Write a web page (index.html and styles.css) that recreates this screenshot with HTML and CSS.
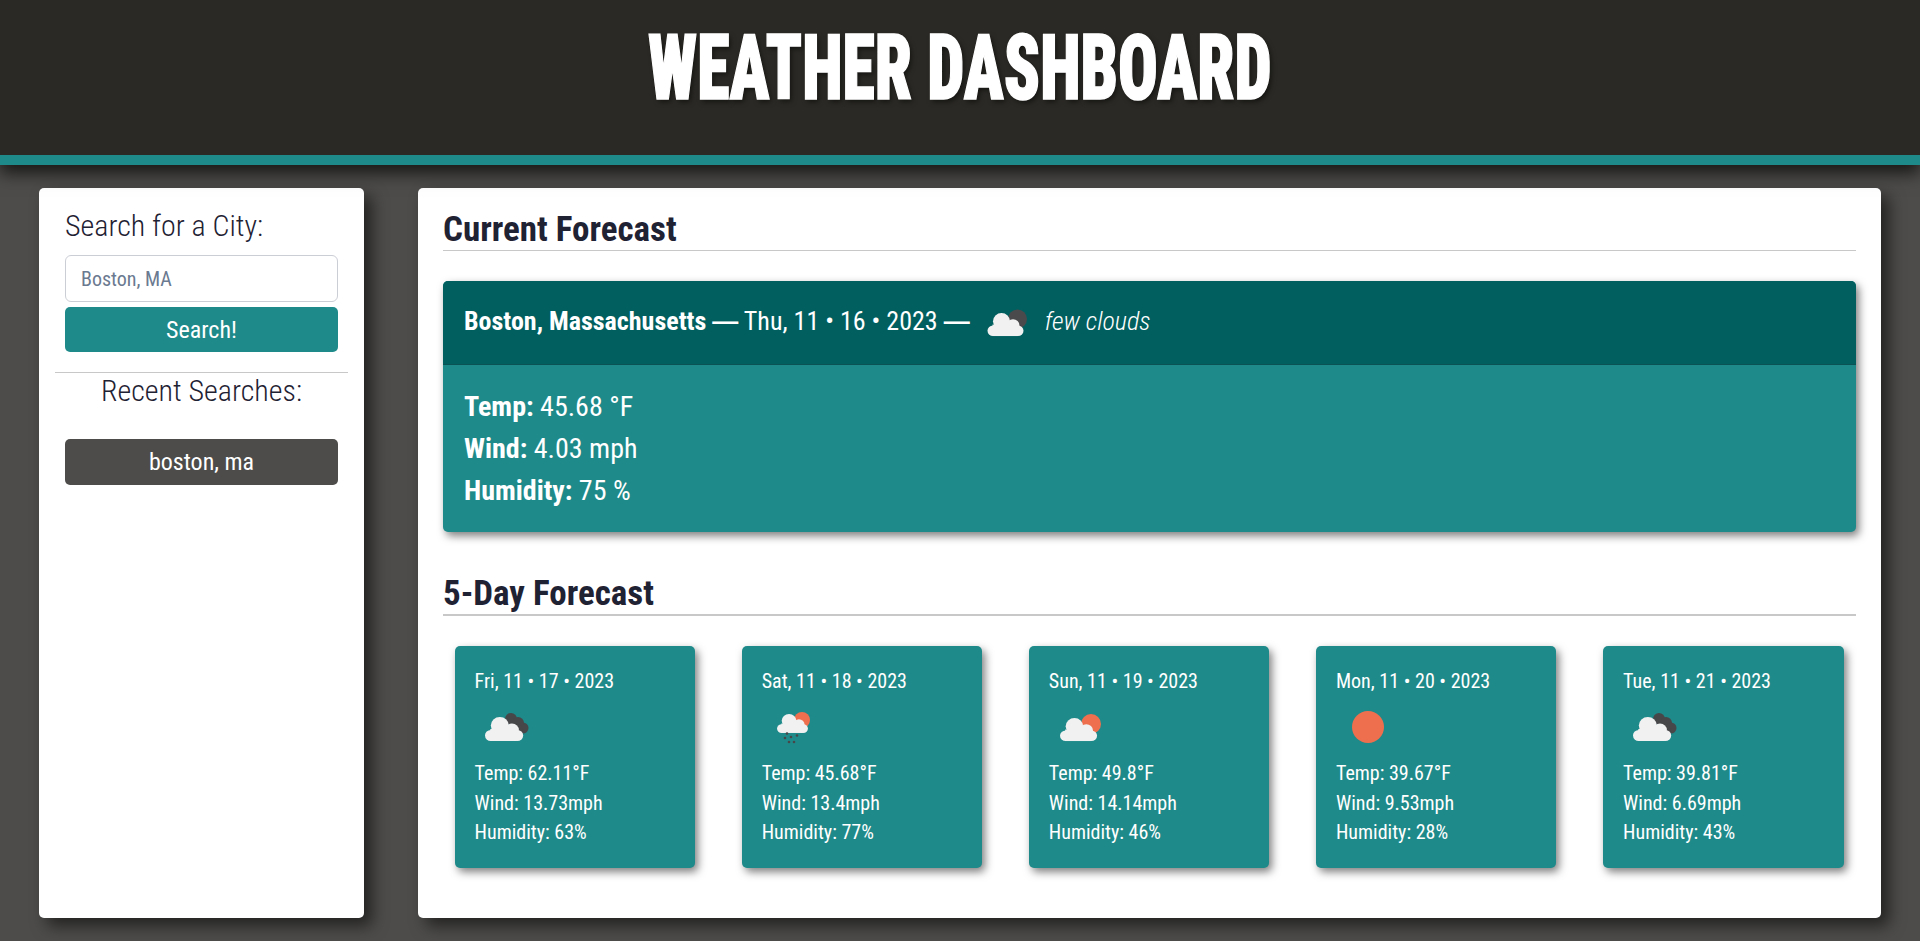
FILE: index.html
```html
<!DOCTYPE html>
<html lang="en">
<head>
<meta charset="utf-8">
<title>Weather Dashboard</title>
<link rel="stylesheet" href="styles.css">
</head>
<body>
<header class="site-header"><h1 class="site-title"><span class="site-title-text">WEATHER DASHBOARD</span></h1></header>
<div class="layout">
  <aside class="sidebar">
    <form class="search">
      <label class="search-label" for="city">Search for a City:</label>
      <input class="search-input" id="city" type="text" placeholder="Boston, MA">
      <button class="btn btn-teal" type="button">Search!</button>
    </form>
    <hr class="side-rule">
    <h2 class="recent-title">Recent Searches:</h2>
    <div class="recent-list"><button class="btn btn-dark" type="button">boston, ma</button></div>
  </aside>
  <main class="content">
    <h2 class="section-title">Current Forecast</h2>
    <section class="current">
      <div class="current-head">
        <span><strong>Boston, Massachusetts</strong> <span class="dash">—</span> Thu, 11 • 16 • 2023 <span class="dash">—</span></span>
        <svg class="current-icon" width="44" height="30" viewBox="0 0 44 30"><use href="#i-few"/></svg>
        <em class="current-desc">few clouds</em>
      </div>
      <div class="current-body">
        <p><strong>Temp:</strong> 45.68 °F</p>
        <p><strong>Wind:</strong> 4.03 mph</p>
        <p><strong>Humidity:</strong> 75 %</p>
      </div>
    </section>
    <h2 class="section-title five">5-Day Forecast</h2>
    <section class="days">
      <article class="day">
        <p class="day-date">Fri, 11 • 17 • 2023</p>
        <svg class="day-icon" width="70" height="50" viewBox="0 0 70 50"><use href="#i-broken"/></svg>
        <p>Temp: 62.11°F</p><p>Wind: 13.73mph</p><p>Humidity: 63%</p>
      </article>
      <article class="day">
        <p class="day-date">Sat, 11 • 18 • 2023</p>
        <svg class="day-icon" width="70" height="50" viewBox="0 0 70 50"><use href="#i-rain"/></svg>
        <p>Temp: 45.68°F</p><p>Wind: 13.4mph</p><p>Humidity: 77%</p>
      </article>
      <article class="day">
        <p class="day-date">Sun, 11 • 19 • 2023</p>
        <svg class="day-icon" width="70" height="50" viewBox="0 0 70 50"><use href="#i-sun-cloud"/></svg>
        <p>Temp: 49.8°F</p><p>Wind: 14.14mph</p><p>Humidity: 46%</p>
      </article>
      <article class="day">
        <p class="day-date">Mon, 11 • 20 • 2023</p>
        <svg class="day-icon" width="70" height="50" viewBox="0 0 70 50"><circle cx="32" cy="21" r="16" fill="#ee6f4e"/></svg>
        <p>Temp: 39.67°F</p><p>Wind: 9.53mph</p><p>Humidity: 28%</p>
      </article>
      <article class="day">
        <p class="day-date">Tue, 11 • 21 • 2023</p>
        <svg class="day-icon" width="70" height="50" viewBox="0 0 70 50"><use href="#i-broken"/></svg>
        <p>Temp: 39.81°F</p><p>Wind: 6.69mph</p><p>Humidity: 43%</p>
      </article>
    </section>
  </main>
</div>
<svg class="defs" width="0" height="0">
  <defs>
    <g id="cloud" fill="#f1f1f1">
      <circle cx="5.500" cy="18.500" r="5.500"/>
      <circle cx="14" cy="8.500" r="8.500"/>
      <circle cx="25.500" cy="13" r="6.500"/>
      <circle cx="30.500" cy="18.500" r="5.500"/>
      <rect x="5" y="12" width="25" height="12"/>
    </g>
    <g id="i-few">
      <circle cx="32.500" cy="11" r="9.500" fill="#4a4a4c"/>
      <use href="#cloud" transform="translate(2.500 5) scale(1 .96)"/>
    </g>
    <g id="i-broken">
      <g fill="#47474a">
        <circle cx="36" cy="13" r="6"/><circle cx="43" cy="17" r="6"/><circle cx="48" cy="22" r="5.500"/><circle cx="42" cy="24" r="6"/>
      </g>
      <use href="#cloud" transform="translate(10 11) scale(1.06 1)"/>
    </g>
    <g id="i-rain">
      <circle cx="40" cy="14" r="8" fill="#ee6f4e"/>
      <use href="#cloud" transform="translate(15 8) scale(.86 .79)"/>
      <g fill="#47474a">
        <circle cx="25" cy="27.500" r="1.300"/><circle cx="23" cy="32" r="1.300"/><circle cx="29" cy="31" r="1.300"/><circle cx="35" cy="29.500" r="1.300"/><circle cx="27" cy="36" r="1.300"/><circle cx="32" cy="36" r="1.300"/>
      </g>
    </g>
    <g id="i-sun-cloud">
      <circle cx="42" cy="18" r="10" fill="#ee6f4e"/>
      <use href="#cloud" transform="translate(11 12) scale(1.03 .96)"/>
    </g>
  </defs>
</svg>
</body>
</html>
```

FILE: styles.css
```css
* { box-sizing: border-box; }
html, body { margin: 0; height: 100%; }
body {
  display: flex;
  flex-direction: column;
  background: #4d4c4a;
  color: #1f2233;
  font-family: "Roboto Condensed", "Liberation Sans Narrow", Roboto, sans-serif;
  font-stretch: condensed;
  overflow: hidden;
}
p { margin: 0; }
.defs { position: absolute; }
.site-header {
  height: 165px;
  flex: none;
  background: #2a2925;
  border-bottom: 10px solid #1f8a8a;
  box-shadow: 0 8px 16px rgba(0, 0, 0, .7);
  text-align: center;
  position: relative;
}
.site-title {
  margin: 0;
  padding-top: 17px;
  color: #fff;
  font-family: "Roboto", sans-serif;
  font-weight: 900;
  font-size: 90px;
  line-height: 104px;
  font-stretch: condensed;
}
.site-title-text {
  display: inline-block;
  transform: scaleX(.734);
  -webkit-text-stroke: 1.5px #fff;
  text-shadow: 3px 3px 6px rgba(0, 0, 0, .5);
}
.layout {
  flex: 1;
  display: flex;
  gap: 54px;
  padding: 23px 39px;
  min-height: 0;
}
.sidebar, .content {
  background: #fff;
  border-radius: 5px;
  box-shadow: 8px 8px 16px rgba(0, 0, 0, .55);
}
.sidebar { flex: none; width: 325px; padding: 20px 16px 16px; }
.search { padding: 0 10px; display: flex; flex-direction: column; }
.search-label { font-size: 30px; font-weight: 300; line-height: 36px; margin-bottom: 11px; }
.search-input {
  height: 47px;
  border: 1px solid #ccced6;
  border-radius: 6px;
  padding: 0 15px;
  font: inherit;
  font-size: 20px;
  margin-bottom: 5px;
}
.search-input::placeholder { color: #6b7a90; opacity: 1; }
.btn {
  display: block;
  width: 100%;
  border: 0;
  border-radius: 5px;
  color: #fff;
  font: inherit;
  font-size: 24px;
  height: 45px;
}
.btn-teal { background: #1f8a8a; }
.btn-dark { background: #4d4c4a; height: 46px; }
.side-rule { border: 0; border-top: 1px solid #c8c8c8; margin: 20px 0 0; }
.recent-title { margin: 0; font-size: 30px; font-weight: 300; text-align: center; line-height: 36px; }
.recent-list { padding: 30px 10px 0; }
.content { flex: 1; padding: 22px 25px 16px; }
.section-title {
  margin: 0;
  font-size: 35px;
  font-weight: 700;
  line-height: 40px;
  border-bottom: 1px solid #c8c8c8;
}
.five { margin-top: 42px; border-bottom-width: 2px; }
.current {
  margin-top: 30px;
  border-radius: 5px;
  background: #1f8a8a;
  color: #fff;
  overflow: hidden;
  box-shadow: 3px 4px 8px rgba(0, 0, 0, .5);
}
.current-head {
  height: 84px;
  background: #025f60;
  border-bottom: 1px solid #0a5253;
  display: flex;
  align-items: center;
  padding: 0 21px 3px;
  font-size: 26px;
}
.dash { font-family: "Liberation Sans", sans-serif; font-weight: 700; }
.current-icon { margin: 3px 16px 0 15px; }
.current-desc { font-weight: 300; }
.current-body { padding: 21px 21px 20px; font-size: 28px; line-height: 42px; }
.days { margin-top: 30px; display: flex; justify-content: space-between; padding: 0 12.4px 0 11.6px; }
.day {
  width: 240.5px;
  height: 222px;
  padding: 20px;
  background: #1f8a8a;
  border-radius: 5px;
  color: #fff;
  font-size: 20px;
  line-height: 29.7px;
  box-shadow: 3px 4px 8px rgba(0, 0, 0, .5);
}
.day-date { margin-bottom: 10px; line-height: 30px; }
.day-icon { display: block; margin-bottom: 3px; }
```
